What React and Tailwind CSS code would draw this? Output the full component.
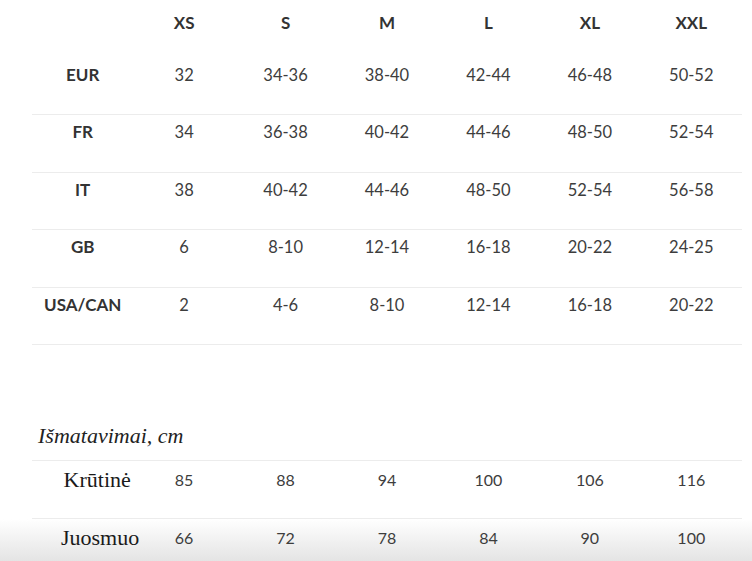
import React from "react";

const sizes = ["XS", "S", "M", "L", "XL", "XXL"];
const rows = [
  ["EUR", "32", "34-36", "38-40", "42-44", "46-48", "50-52"],
  ["FR", "34", "36-38", "40-42", "44-46", "48-50", "52-54"],
  ["IT", "38", "40-42", "44-46", "48-50", "52-54", "56-58"],
  ["GB", "6", "8-10", "12-14", "16-18", "20-22", "24-25"],
  ["USA/CAN", "2", "4-6", "8-10", "12-14", "16-18", "20-22"],
];
const measures = [
  ["Krūtinė", "85", "88", "94", "100", "106", "116"],
  ["Juosmuo", "66", "72", "78", "84", "90", "100"],
];

const sans = { fontFamily: "Lato, 'Open Sans', sans-serif" };
const serif = { fontFamily: "'Liberation Serif', 'Times New Roman', serif" };

export default function App() {
  return (
    <div className="relative h-[561px] w-[752px] overflow-hidden bg-white">
      <div className="pointer-events-none absolute bottom-0 left-0 right-0 h-[42px] bg-linear-to-b from-white to-[#e4e4e4]" />
      <div className="relative pl-[32px] pr-[10px]">
        {/* header */}
        <div className="grid h-[57.5px] grid-cols-7 pt-[11px]" style={sans}>
          <div />
          {sizes.map((s) => (
            <div key={s} className="text-center text-[17px] font-bold leading-[24px] text-[#333]">
              {s}
            </div>
          ))}
        </div>
        {rows.map((r) => (
          <div key={r[0]} className="box-border h-[57.5px] border-b border-[#ececec]" style={sans}>
            <div className="grid h-[34px] grid-cols-7 items-center">
              {r.map((c, i) => (
                <div
                  key={i}
                  className={
                    i === 0
                      ? "text-center text-[17px] font-bold leading-[24px] text-[#333]"
                      : "text-center text-[16.5px] leading-[24px] text-[#3d3d3d]"
                  }
                >
                  {c}
                </div>
              ))}
            </div>
          </div>
        ))}
        {/* measurements */}
        <div
          className="box-border border-b border-[#ececec] pb-[10px] pl-[6px] pt-[77px] text-[22px] italic leading-[28px] text-[#222]"
          style={serif}
        >
          Išmatavimai, cm
        </div>
        {measures.map((r) => (
          <div key={r[0]} className="box-border h-[58px] border-b border-[#ececec]">
            <div className="grid h-[38px] grid-cols-7 items-center">
              {r.map((c, i) =>
                i === 0 ? (
                  <div key={i} className="pl-[29px] text-center text-[22px] leading-[28px] text-[#1a1a1a]" style={serif}>
                    {c}
                  </div>
                ) : (
                  <div key={i} className="text-center text-[16px] leading-[22px] text-[#3d3d3d]" style={sans}>
                    {c}
                  </div>
                )
              )}
            </div>
          </div>
        ))}
      </div>
    </div>
  );
}
